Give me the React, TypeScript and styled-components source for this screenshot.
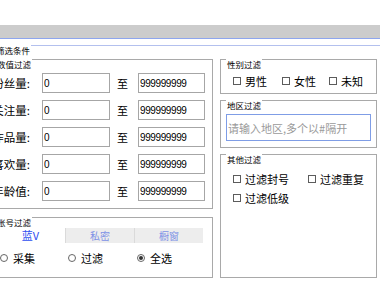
import styled, { createGlobalStyle } from "styled-components";

const GlobalStyle = createGlobalStyle`
  html, body {
    margin: 0;
    padding: 0;
    background: #fff;
  }
  body {
    font-family: "Noto Sans CJK SC", "Liberation Sans", sans-serif;
    color: #000;
  }
`;

const Page = styled.div`
  width: 380px;
  height: 282px;
  overflow: hidden;
  background: #fff;
`;

const TopSpace = styled.div`
  height: 25px;
`;

const Bar = styled.div`
  height: 13px;
  background: #cccccc;
  border-bottom: 1px solid #8ea6ee;
`;

const Frame = styled.div`
  margin: 6px 0 0 -24px;
  width: 440px;
  border: 1px solid #b3c0ee;
  padding: 0 0 12px 13px;
  box-sizing: border-box;
`;

const Caption = styled.div`
  width: fit-content;
  height: 11px;
  margin: -1px 0 0 5px;
  padding: 0 1px;
  background: #fff;
  font-size: 8.5px;
  line-height: 11px;
  white-space: nowrap;
`;

const Body = styled.div`
  display: flex;
  gap: 7px;
  margin-top: 3px;
`;

const Column = styled.div<{ $width: number; $gap: number }>`
  display: flex;
  flex-direction: column;
  width: ${(p) => p.$width}px;
  gap: ${(p) => p.$gap}px;
`;

const Group = styled.div<{ $grow?: boolean; $pb: number }>`
  border: 1px solid #a9a9a9;
  padding-bottom: ${(p) => p.$pb}px;
  flex: ${(p) => (p.$grow ? 1 : "none")};
`;

const Rows = styled.div`
  display: flex;
  flex-direction: column;
  gap: 7px;
  margin-top: 3px;
`;

const Row = styled.div`
  display: flex;
  align-items: center;
  height: 20px;
`;

const Label = styled.div`
  width: 39px;
  margin-right: 12px;
  text-align: right;
  font-size: 11.5px;
  white-space: nowrap;
`;

const NumInput = styled.input<{ $width: number }>`
  width: ${(p) => p.$width}px;
  height: 20px;
  box-sizing: border-box;
  border: 1px solid #a6a6a6;
  padding: 0 0 0 1px;
  margin: 0;
  font-family: "Liberation Sans", sans-serif;
  font-size: 10px;
  letter-spacing: -0.4px;
  color: #000;
  outline: none;
`;

const To = styled.div`
  width: 28px;
  padding-right: 3px;
  box-sizing: border-box;
  text-align: center;
  font-size: 11px;
`;

const Tabs = styled.div`
  display: flex;
  height: 15px;
  margin-left: 5px;
`;

const Tab = styled.div<{ $active?: boolean }>`
  width: 69px;
  height: 15px;
  box-sizing: border-box;
  text-align: center;
  line-height: 15px;
  font-size: ${(p) => (p.$active ? 11 : 10)}px;
  color: ${(p) => (p.$active ? "#2f4ff0" : "#7d92e6")};
  background: ${(p) => (p.$active ? "#fff" : "#ededed")};
  & + & {
    border-left: 1px solid #dadada;
  }
`;

const Radios = styled.div`
  display: grid;
  grid-template-columns: 68px 69px auto;
  height: 15px;
  margin: 7px 0 0 9px;
`;

const RadioItem = styled.div`
  display: flex;
  align-items: center;
  gap: 5px;
  font-size: 11px;
`;

const Dot = styled.span<{ $on?: boolean }>`
  width: 8px;
  height: 8px;
  box-sizing: border-box;
  border: 1px solid #666;
  border-radius: 50%;
  display: flex;
  align-items: center;
  justify-content: center;
  &::after {
    content: "";
    width: 4px;
    height: 4px;
    border-radius: 50%;
    background: ${(p) => (p.$on ? "#333" : "transparent")};
  }
`;

const CheckRow = styled.div<{ $cols: string; $mt: number }>`
  display: grid;
  grid-template-columns: ${(p) => p.$cols};
  height: 14px;
  margin: ${(p) => p.$mt}px 0 0 12px;
`;

const CheckItem = styled.div`
  display: flex;
  align-items: center;
  gap: 4px;
  font-size: 11px;
  white-space: nowrap;
`;

const Box = styled.span`
  width: 8px;
  height: 8px;
  box-sizing: border-box;
  border: 1px solid #5c5c5c;
  background: #fff;
`;

const AreaInput = styled.input`
  display: block;
  width: 145px;
  height: 27px;
  margin: 3px 0 0 5px;
  box-sizing: border-box;
  border: 1px solid #7f9de6;
  padding: 0 0 0 1px;
  font-family: "Noto Sans CJK SC", sans-serif;
  font-size: 11px;
  outline: none;
  &::placeholder {
    color: #9a9a9a;
  }
`;

const fields = ["粉丝量:", "关注量:", "作品量:", "喜欢量:", "年龄值:"];

const Check = ({ text }: { text: string }) => (
  <CheckItem>
    <Box />
    {text}
  </CheckItem>
);

export default function App() {
  return (
    <Page>
      <GlobalStyle />
      <TopSpace />
      <Bar />
      <Frame>
        <Caption>筛选条件</Caption>
        <Body>
          <Column $width={223} $gap={8}>
            <Group $pb={7}>
              <Caption>数值过滤</Caption>
              <Rows>
                {fields.map((f) => (
                  <Row key={f}>
                    <Label>{f}</Label>
                    <NumInput $width={68} defaultValue="0" readOnly />
                    <To>至</To>
                    <NumInput $width={67} defaultValue="999999999" readOnly />
                  </Row>
                ))}
              </Rows>
            </Group>
            <Group $pb={12}>
              <Caption>账号过滤</Caption>
              <Tabs>
                <Tab $active>蓝V</Tab>
                <Tab>私密</Tab>
                <Tab>橱窗</Tab>
              </Tabs>
              <Radios>
                <RadioItem>
                  <Dot />
                  采集
                </RadioItem>
                <RadioItem>
                  <Dot />
                  过滤
                </RadioItem>
                <RadioItem>
                  <Dot $on />
                  全选
                </RadioItem>
              </Radios>
            </Group>
          </Column>
          <Column $width={157} $gap={6}>
            <Group $pb={6}>
              <Caption>性别过滤</Caption>
              <CheckRow $cols="49px 47px auto" $mt={3}>
                <Check text="男性" />
                <Check text="女性" />
                <Check text="未知" />
              </CheckRow>
            </Group>
            <Group $pb={6}>
              <Caption>地区过滤</Caption>
              <AreaInput placeholder="请输入地区,多个以#隔开" />
            </Group>
            <Group $grow $pb={6}>
              <Caption>其他过滤</Caption>
              <CheckRow $cols="75px auto" $mt={6}>
                <Check text="过滤封号" />
                <Check text="过滤重复" />
              </CheckRow>
              <CheckRow $cols="75px auto" $mt={5}>
                <Check text="过滤低级" />
              </CheckRow>
            </Group>
          </Column>
        </Body>
      </Frame>
    </Page>
  );
}
